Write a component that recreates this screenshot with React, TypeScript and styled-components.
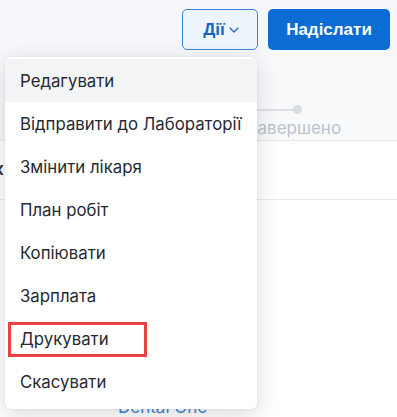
import React from "react";
import styled, { createGlobalStyle } from "styled-components";

const Global = createGlobalStyle`
  html, body { margin: 0; padding: 0; background: #ffffff; }
  body { font-family: Inter, "Noto Sans", sans-serif; width: 397px; height: 417px; overflow: hidden; }
  * { box-sizing: border-box; }
`;

const Page = styled.div`
  position: relative;
  width: 397px;
  height: 417px;
  overflow: hidden;
  background: #ffffff;
`;

const Header = styled.div`
  height: 57px;
  background: #f5f7fa;
  display: flex;
  justify-content: flex-end;
  align-items: flex-start;
  gap: 10px;
  padding: 9px 7px 0 0;
`;

const ActionsButton = styled.button`
  width: 76px;
  height: 41px;
  border: 1px solid #3a86d4;
  border-radius: 5px;
  background: #edf4fc;
  color: #1466c2;
  font-family: "Liberation Sans", Arial, sans-serif;
  font-weight: 700;
  font-size: 17px;
  display: flex;
  align-items: center;
  justify-content: center;
  gap: 4px;
  padding: 0 0 0 2px;
`;

const SendButton = styled.button`
  width: 122px;
  height: 41px;
  border: none;
  border-radius: 5px;
  background: #0b6cd4;
  color: #ffffff;
  font-family: "Liberation Sans", Arial, sans-serif;
  font-weight: 700;
  font-size: 17px;
`;

const Stepper = styled.div`
  height: 84px;
  background: #f8f9fb;
  border-bottom: 1px solid #e8ebef;
  display: flex;
  justify-content: flex-start;
  padding: 48px 0 0 232px;
`;

const Step = styled.div`
  display: flex;
  flex-direction: column;
  align-items: flex-start;
`;

const Track = styled.div`
  display: flex;
  align-items: center;
  width: 70px;
`;

const TrackLine = styled.div`
  flex: 1;
  height: 2px;
  background: #dde1e6;
`;

const Dot = styled.div`
  width: 9px;
  height: 9px;
  border-radius: 50%;
  background: #d8dde3;
`;

const StepLabel = styled.div`
  margin-top: 4px;
  margin-left: 15px;
  font-size: 17px;
  color: #bcc3cb;
`;

const Row = styled.div`
  height: 61px;
  border-bottom: 1px solid #e8ebef;
  display: flex;
  align-items: center;
  margin-top: -2px;
`;

const RowText = styled.span`
  font-size: 17px;
  font-weight: 600;
  color: #2a3340;
  margin-left: -6px;
`;

const Footer = styled.div`
  display: flex;
  justify-content: flex-start;
  padding: 197px 0 0 118px;
`;

const FooterLink = styled.span`
  font-size: 17px;
  color: #3d86cf;
`;

const Menu = styled.div`
  position: absolute;
  top: 57px;
  left: 5px;
  width: 252px;
  padding: 2px 0 6px;
  background: #ffffff;
  border-radius: 6px;
  box-shadow: 0 6px 22px rgba(20, 30, 50, 0.16), 0 0 3px rgba(20, 30, 50, 0.06);
`;

const Item = styled.div<{ $active?: boolean }>`
  position: relative;
  height: 43px;
  display: flex;
  align-items: center;
  padding-left: 15px;
  font-size: 16.8px;
  color: #262a30;
  background: ${(p) => (p.$active ? "#f3f4f6" : "transparent")};
  white-space: nowrap;
`;

const Highlight = styled.div`
  position: absolute;
  left: 3px;
  top: 5px;
  width: 139px;
  height: 35px;
  border: 3px solid #e8413f;
`;

const items = [
  "Редагувати",
  "Відправити до Лабораторії",
  "Змінити лікаря",
  "План робіт",
  "Копіювати",
  "Зарплата",
  "Друкувати",
  "Скасувати",
];

export default function App() {
  return (
    <Page>
      <Global />
      <Header>
        <ActionsButton>
          Дії
          <svg width="10" height="6" viewBox="0 0 10 6" fill="none">
            <path d="M1 1l4 4 4-4" stroke="#1466c2" strokeWidth="1.2" strokeLinecap="round" strokeLinejoin="round" />
          </svg>
        </ActionsButton>
        <SendButton>Надіслати</SendButton>
      </Header>
      <Stepper>
        <Step>
          <Track>
            <TrackLine />
            <Dot />
          </Track>
          <StepLabel>Завершено</StepLabel>
        </Step>
      </Stepper>
      <Row>
        <RowText>к</RowText>
      </Row>
      <Footer>
        <FooterLink>Dental One</FooterLink>
      </Footer>
      <Menu>
        {items.map((t, i) => (
          <Item key={t} $active={i === 0}>
            {t}
            {t === "Друкувати" && <Highlight />}
          </Item>
        ))}
      </Menu>
    </Page>
  );
}
